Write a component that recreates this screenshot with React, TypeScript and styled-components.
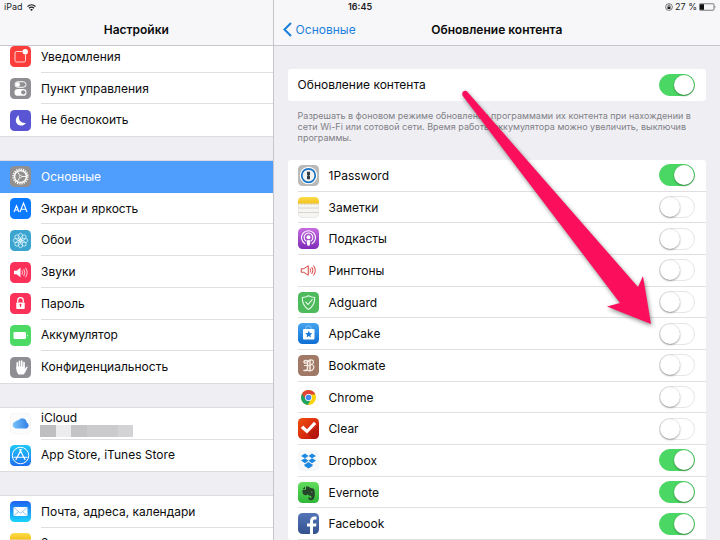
import React, { useState } from "react";
import styled, { createGlobalStyle } from "styled-components";

const Global = createGlobalStyle`
  * { box-sizing: border-box; }
  html, body { margin: 0; height: 100%; overflow: hidden; }
  body { font-family: Inter, "Liberation Sans", sans-serif; font-size: 12px; color: #0b0b0c; background: #efeef3; }
  h1, h2, p { margin: 0; }
`;

const Shell = styled.div`
  position: relative;
  display: flex;
  height: 100vh;
  overflow: hidden;
`;

const StatusBar = styled.header`
  position: absolute;
  z-index: 3;
  inset: 0 0 auto 0;
  display: grid;
  grid-template-columns: 1fr auto 1fr;
  align-items: center;
  height: 14px;
  padding: 0 4px;
  font-size: 9px;
  line-height: 14px;
  color: #1c1c1e;
`;

const StatusSide = styled.div<{ $end?: boolean }>`
  display: flex;
  align-items: center;
  justify-content: ${(p) => (p.$end ? "flex-end" : "flex-start")};
  gap: ${(p) => (p.$end ? 2 : 4)}px;
`;

const Clock = styled.time`
  font-weight: 600;
`;

const Sidebar = styled.aside`
  flex: 0 0 38%;
  display: flex;
  flex-direction: column;
  overflow: hidden;
  border-right: 1px solid #c6c6ca;
`;

const Detail = styled.main`
  position: relative;
  flex: 1;
  min-width: 0;
  overflow: hidden;
`;

const NavBar = styled.div`
  position: relative;
  z-index: 1;
  flex: none;
  display: grid;
  grid-template-columns: 1fr auto 1fr;
  align-items: center;
  height: 46px;
  padding: 14px 9px 0;
  background: #f7f7f9;
  border-bottom: 1px solid #c8c8cc;
`;

const Title = styled.h1`
  grid-column: 2;
  font-size: 12px;
  line-height: 16px;
  font-weight: 600;
  white-space: nowrap;
`;

const Back = styled.a`
  display: flex;
  align-items: center;
  gap: 4px;
  justify-self: start;
  color: #1b7fdc;
  text-decoration: none;
  line-height: 16px;
`;

const Menu = styled.nav`
  display: flex;
  flex-direction: column;
  gap: 25px;
  margin-top: -5px;
`;

/* Three rows take 95px; rows share the height of their group evenly. */
const groupHeight = (rows: number) => Math.round((rows * 95) / 3);

const Group = styled.div<{ $rows: number }>`
  display: flex;
  flex-direction: column;
  min-height: ${(p) => groupHeight(p.$rows)}px;
  background: #fff;
  box-shadow: 0 -1px #dcdbe0, 0 1px #dcdbe0;
`;

const MenuLink = styled.a<{ $active?: boolean }>`
  flex: 1;
  display: flex;
  gap: 10px;
  align-items: center;
  padding-left: 10px;
  color: ${(p) => (p.$active ? "#fff" : "inherit")};
  background: ${(p) => (p.$active ? "#4f9dfd" : "transparent")};
  text-decoration: none;
`;

const MenuText = styled.span<{ $line: boolean }>`
  flex: 1;
  align-self: stretch;
  display: flex;
  flex-direction: column;
  justify-content: center;
  line-height: 15px;
  border-bottom: 1px solid ${(p) => (p.$line ? "#dfdfe2" : "transparent")};
`;

const Redacted = styled.span`
  display: flex;
  width: 93px;
  height: 12px;
  margin-left: -1px;
`;

const Block = styled.span<{ $tone: string }>`
  flex: 1;
  background: ${(p) => p.$tone};
`;

const Content = styled.div`
  display: flex;
  flex-direction: column;
  padding: 23px 14px 0;
`;

const Card = styled.div<{ $rows: number }>`
  display: flex;
  flex-direction: column;
  min-height: ${(p) => groupHeight(p.$rows)}px;
  background: #fff;
  border-radius: 3px;
`;

const Setting = styled.label<{ $line?: boolean }>`
  flex: 1;
  display: flex;
  align-items: center;
  gap: 10px;
  margin-left: 10px;
  padding-right: 11px;
  line-height: 15px;
  border-bottom: 1px solid ${(p) => (p.$line ? "#dfdfe2" : "transparent")};
`;

const Name = styled.span`
  flex: 1;
`;

const Note = styled.p`
  padding: 9px 0 17px 10px;
  font-size: 9px;
  line-height: 11px;
  color: #818187;
`;

const Switch = styled.input`
  appearance: none;
  flex: none;
  position: relative;
  width: 36px;
  height: 22px;
  margin: 0;
  border-radius: 11px;
  border: 1px solid #e6e6e8;
  background: #fff;
  &::before {
    content: "";
    position: absolute;
    top: 0;
    left: 0;
    width: 20px;
    height: 20px;
    border-radius: 50%;
    background: #fff;
    box-shadow: 0 1px 2px rgba(0, 0, 0, 0.34), 0 0 1px rgba(0, 0, 0, 0.2);
  }
  &:checked {
    border-color: #4bd763;
    background: #4bd763;
  }
  &:checked::before {
    left: auto;
    right: 0;
  }
`;

const Pointer = styled.svg`
  position: absolute;
  z-index: 2;
  top: 84px;
  right: 62px;
  width: 200px;
  height: 248px;
  pointer-events: none;
  filter: drop-shadow(1px 2px 2px rgba(0, 0, 0, 0.45));
`;

const IconSvg = styled.svg`
  flex: none;
  width: 21px;
  height: 21px;
  display: block;
`;

const Tile = ({ fill, children }: { fill: string; children?: React.ReactNode }) => (
  <IconSvg viewBox="0 0 42 42" fill="none" aria-hidden="true">
    <defs>
      <linearGradient id="mail" x2="0" y2="1"><stop stopColor="#1d62f0" /><stop offset="1" stopColor="#1ad4fd" /></linearGradient>
      <linearGradient id="store" x2="0" y2="1"><stop stopColor="#1fc8fa" /><stop offset="1" stopColor="#1d6ff0" /></linearGradient>
      <linearGradient id="cloud" x2="1"><stop stopColor="#7cc4fa" /><stop offset="1" stopColor="#2f7fe6" /></linearGradient>
      <linearGradient id="podcast" x2="0" y2="1"><stop stopColor="#c86be0" /><stop offset="1" stopColor="#7d2bb8" /></linearGradient>
      <linearGradient id="cake" x2="0" y2="1"><stop stopColor="#45a4f0" /><stop offset="1" stopColor="#0f6fd4" /></linearGradient>
      <linearGradient id="clear" x2="1" y2="1"><stop stopColor="#f0500a" /><stop offset="1" stopColor="#c40f12" /></linearGradient>
      <linearGradient id="ever" x2="0" y2="1"><stop stopColor="#62dc5c" /><stop offset="1" stopColor="#2fb638" /></linearGradient>
      <linearGradient id="fb" x2="0" y2="1"><stop stopColor="#5475b8" /><stop offset="1" stopColor="#35528f" /></linearGradient>
      <linearGradient id="note" x2="0" y2="1"><stop stopColor="#fbdc4c" /><stop offset="1" stopColor="#f5c11a" /></linearGradient>
    </defs>
    <rect width="42" height="42" rx="9" fill={fill} />
    {children}
  </IconSvg>
);

const NotesIcon = () => (
  <Tile fill="#f6f5f2">
    <path d="M0 13V9a9 9 0 0 1 9-9h24a9 9 0 0 1 9 9v4z" fill="url(#note)" />
    <path d="M0 14h42" stroke="#b99b3c" strokeWidth="1.500" strokeDasharray="1.500 1.500" />
    <path d="M0 22h42M0 31h42" stroke="#c9c8c6" strokeWidth="1.500" />
    <path d="M.5 14v19a8.500 8.500 0 0 0 8.500 8.500h24a8.500 8.500 0 0 0 8.500-8.500V14" stroke="#dddcd9" />
  </Tile>
);

const icons: Record<string, React.ReactNode> = {
  notify: (
    <Tile fill="#fc3d39">
      <path d="M25 11H13a3 3 0 0 0-3 3v15a3 3 0 0 0 3 3h15a3 3 0 0 0 3-3V17" stroke="#fff" strokeWidth="1.600" />
      <circle cx="30.500" cy="11.500" r="5.500" fill="#fff" />
    </Tile>
  ),
  control: (
    <Tile fill="#8e8e93">
      <rect x="10" y="7.500" width="22" height="11" rx="5.500" stroke="#fff" strokeWidth="2" />
      <circle cx="15.500" cy="13" r="4.500" fill="#fff" />
      <rect x="9" y="22" width="24" height="13.500" rx="6.700" fill="#fff" />
      <circle cx="26.500" cy="28.700" r="4.300" fill="#8e8e93" />
    </Tile>
  ),
  moon: (
    <Tile fill="#5a55d3">
      <path d="M18 10.500C9.500 15 9.500 27 18.500 30.500 24 32.500 29.500 30 32 25.500 25 27.500 15.500 22 18 10.500z" fill="#fff" />
    </Tile>
  ),
  gear: (
    <Tile fill="#92908f">
      <circle cx="21" cy="21" r="14.500" stroke="#fff" strokeWidth="3.500" strokeDasharray="2.500 2.056" />
      <circle cx="21" cy="21" r="11.800" stroke="#fff" strokeWidth="2.600" />
      <circle cx="21" cy="21" r="2.400" stroke="#fff" strokeWidth="1.400" />
      <path d="M23.500 21h8.500M19.500 19l-4.500-7.500M19.500 23l-4.500 7.500" stroke="#fff" strokeWidth="1.700" />
    </Tile>
  ),
  display: (
    <Tile fill="#0b7aff">
      <path d="M8 28l5-12.500L18 28M9.500 24h7M20 28l7-18 7 18M22.500 22.500h9" stroke="#fff" strokeWidth="2.100" />
    </Tile>
  ),
  wallpaper: (
    <Tile fill="#3ba5d0">
      <g stroke="#e3f6fc" strokeWidth="1.500">
        {[0, 45, 90, 135, 180, 225, 270, 315].map((a) => (
          <ellipse key={a} cx="21" cy="13" rx="4.300" ry="6.500" transform={`rotate(${a} 21 21)`} />
        ))}
        <circle cx="21" cy="21" r="3" />
      </g>
    </Tile>
  ),
  sound: (
    <Tile fill="#fb3159">
      <path d="M8 17.500h5l8-6v19l-8-6H8z" fill="#fff" />
      <path d="M24 17q2.500 4 0 8M27.500 14q4.500 7 0 14M31 11.500q6.500 9.500 0 19" stroke="#fff" strokeWidth="1.500" />
    </Tile>
  ),
  lock: (
    <Tile fill="#fb3159">
      <rect x="12.500" y="19" width="17" height="13" rx="1.500" fill="#fff" />
      <path d="M15.500 19v-4.500a5.500 5.500 0 0 1 11 0V19" stroke="#fff" strokeWidth="2.500" />
      <path d="M21 23v5" stroke="#fb3159" strokeWidth="2.200" />
      <circle cx="21" cy="23.500" r="2" fill="#fb3159" />
    </Tile>
  ),
  battery: (
    <Tile fill="#4cd964">
      <rect x="7" y="14" width="25" height="14" rx="2.500" fill="#fff" />
      <path d="M34 18.500q3.500 2.500 0 5z" fill="#fff" />
    </Tile>
  ),
  hand: (
    <Tile fill="#8e8e93">
      <path d="M14.500 23V11.500M19 20V8.500M23.500 20V8M28 21V11" stroke="#fff" strokeWidth="3.300" strokeLinecap="round" />
      <path d="M12.800 19h16.800v5l3.500-4.500q2.500-1 2 1.500L30 31.500 27 35H17q-4.200-5-4.200-10z" fill="#fff" />
    </Tile>
  ),
  icloud: (
    <Tile fill="#fcfcfc">
      <rect x=".5" y=".5" width="41" height="41" rx="9" stroke="#eeeeef" />
      <path d="M11 31a7 7 0 0 1-1-13.500 7 7 0 0 1 7-3 9 9 0 0 1 16.500 4.500A6.500 6.500 0 0 1 33 31z" fill="url(#cloud)" />
    </Tile>
  ),
  appstore: (
    <Tile fill="url(#store)">
      <circle cx="21" cy="21" r="16.500" stroke="#fff" strokeWidth="2" />
      <path d="M22.500 9L12 29M19.500 9L30 29M8 24.500h26" stroke="#fff" strokeWidth="2.400" strokeLinecap="round" />
    </Tile>
  ),
  mail: (
    <Tile fill="url(#mail)">
      <rect x="7" y="12" width="28" height="18" rx="1.500" fill="#fff" />
      <path d="M8 13l11 10q2 1.500 4 0L34 13M8 29l9.500-8M34 29l-9.500-8" stroke="#5ba8f5" strokeWidth="1.300" />
    </Tile>
  ),
  notes: <NotesIcon />,
  password: (
    <Tile fill="#b9bab8">
      <circle cx="21" cy="21" r="17.500" fill="#fff" />
      <circle cx="21" cy="21" r="13.500" fill="#f3f3f1" stroke="#1e74c4" strokeWidth="3.500" />
      <path d="M18 13.500h6v6l-1.500 1.500 1.500 1.500v6h-6v-6l1.500-1.500L18 19.500z" fill="#333b45" />
    </Tile>
  ),
  podcasts: (
    <Tile fill="url(#podcast)">
      <path d="M14 31.500a14 14 0 1 1 14 0M15.500 25.500a8.700 8.700 0 1 1 11 0" stroke="#fff" strokeWidth="2.100" strokeLinecap="round" />
      <circle cx="21" cy="18.500" r="4" fill="#fff" />
      <path d="M17 25q4-2.500 8 0l-1.500 9.500q-2.500 2-5 0z" fill="#fff" />
    </Tile>
  ),
  ringtones: (
    <Tile fill="#fff">
      <path d="M6.500 17.500h5l9-6v19l-9-6h-5z" stroke="#d23a36" strokeWidth="1.900" />
      <path d="M24 17q2.500 4 0 8M27.500 14q4.500 7 0 14M31 11q7 10 0 20" stroke="#d8443f" strokeWidth="2" />
    </Tile>
  ),
  adguard: (
    <Tile fill="#4dba5c">
      <path d="M21 7.500q6 3.500 12.500 3.500c0 12-4 19-12.500 24-8.500-5-12.500-12-12.500-24Q15 11 21 7.500z" stroke="#e6f7e8" strokeWidth="2.200" />
      <path d="M15 19.500l5 5.500 9-10.500" stroke="#fff" strokeWidth="2.200" />
    </Tile>
  ),
  appcake: (
    <Tile fill="url(#cake)">
      <path d="M15.500 12v-1a5.500 5.500 0 0 1 11 0v1" stroke="#8cc7f6" strokeWidth="2" />
      <rect x="10" y="12" width="23" height="21" rx="2" fill="#fff" />
      <path d="M21.500 15.500l2 4.500 5 .5-3.700 3.300 1 5-4.300-2.600-4.300 2.600 1-5-3.700-3.300 5-.5z" fill="#1978d8" />
    </Tile>
  ),
  bookmate: (
    <Tile fill="#a17a67">
      <path d="M21 13q-8-4-9 .5 0 3 4 2.500M19 12v15q0 5-7 4M24 11v20" stroke="#f6ece4" strokeWidth="3" strokeLinecap="round" />
      <path d="M20 12q5-4 10-1c3 4-1 8-5 8 6 0 8 4 6 8-2 5-8 6-13 3M13 21h11" stroke="#f6ece4" strokeWidth="2.400" strokeLinecap="round" />
    </Tile>
  ),
  chrome: (
    <Tile fill="#fdfdfd">
      <rect x=".5" y=".5" width="41" height="41" rx="9" stroke="#f0f0f1" />
      <circle cx="21" cy="21" r="15" fill="#fcd20a" />
      <path d="M21 21L8 13.500a15 15 0 0 0 11.800 22.400l6.200-12z" fill="#1fa463" />
      <path d="M8 13.500A15 15 0 0 1 34.700 15H21l-6 9z" fill="#df4537" />
      <circle cx="21" cy="21" r="7" fill="#fff" />
      <circle cx="21" cy="21" r="5.600" fill="#4688f1" />
    </Tile>
  ),
  clear: (
    <Tile fill="url(#clear)">
      <path d="M19 31L42 13v20a9 9 0 0 1-9 9h-4z" fill="#9c120d" opacity=".45" />
      <path d="M5.500 20l5-5 7.500 7.500L32 7.500l4.500 4.500L18 31z" fill="#fff" />
    </Tile>
  ),
  dropbox: (
    <Tile fill="#f7f8f9">
      <path d="M14 7l7 5-7 4.500L6 12zM28 7l-7 5 7 4.500 8-4.500zM6 21l8-4.500 7 5-7 5zM36 21l-8-4.500-7 5 7 5zM13 28l1.500.5L21 24l6.500 4.500L29 28v4l-8 5-8-5z" fill="#1b87e0" />
    </Tile>
  ),
  evernote: (
    <Tile fill="url(#ever)">
      <path d="M16 9v5q0 2-2 2H9q-1 6 2 9 3 2 7 1l1-2q2 3 5 3.500c4 0 4 5 1 5-2 0-2-2-1-3-4-1-5 7 2 7 6 0 8-7 7.500-16-.5-6-1.500-8-5.500-8l-4-1q-1-2.500-6-2.500zM14 9l-5 5.500h5z" fill="#27432c" />
      <ellipse cx="27.500" cy="20" rx="1.600" ry="1.200" fill="#4bc44c" />
    </Tile>
  ),
  facebook: (
    <Tile fill="url(#fb)">
      <path d="M24 42V27h-6v-6h6v-4c0-7 3.500-10 9-10h4v6h-3.500c-3 0-3.500 1.500-3.500 4v4h7l-1 6h-6v15z" fill="#fff" />
    </Tile>
  ),
};

type MenuEntry = { icon: string; text: string; active?: boolean; account?: boolean };

const menu: MenuEntry[][] = [
  [
    { icon: "notify", text: "Уведомления" },
    { icon: "control", text: "Пункт управления" },
    { icon: "moon", text: "Не беспокоить" },
  ],
  [
    { icon: "gear", text: "Основные", active: true },
    { icon: "display", text: "Экран и яркость" },
    { icon: "wallpaper", text: "Обои" },
    { icon: "sound", text: "Звуки" },
    { icon: "lock", text: "Пароль" },
    { icon: "battery", text: "Аккумулятор" },
    { icon: "hand", text: "Конфиденциальность" },
  ],
  [
    { icon: "icloud", text: "iCloud", account: true },
    { icon: "appstore", text: "App Store, iTunes Store" },
  ],
  [
    { icon: "mail", text: "Почта, адреса, календари" },
    { icon: "notes", text: "Заметки" },
  ],
];

const tones = ["#bfbfc1", "#ececee", "#c4c4c6", "#cbcbcd", "#cbcbcd", "#d3d3d5"];

const apps = [
  { icon: "password", text: "1Password", on: true },
  { icon: "notes", text: "Заметки", on: false },
  { icon: "podcasts", text: "Подкасты", on: false },
  { icon: "ringtones", text: "Рингтоны", on: false },
  { icon: "adguard", text: "Adguard", on: false },
  { icon: "appcake", text: "AppCake", on: false },
  { icon: "bookmate", text: "Bookmate", on: false },
  { icon: "chrome", text: "Chrome", on: false },
  { icon: "clear", text: "Clear", on: false },
  { icon: "dropbox", text: "Dropbox", on: true },
  { icon: "evernote", text: "Evernote", on: true },
  { icon: "facebook", text: "Facebook", on: true },
];

export default function App() {
  const [enabled, setEnabled] = useState(() => apps.map((a) => a.on));
  const [all, setAll] = useState(true);

  return (
    <>
      <Global />
      <Shell>
        <StatusBar>
          <StatusSide>
            <span>iPad</span>
            <svg width="9" height="7" viewBox="0 0 18 14" fill="none" aria-hidden="true">
              <path d="M1 5q8-7 16 0M4 8.500q5-4.500 10 0" stroke="#1c1c1e" strokeWidth="2.400" />
              <path d="M6 11q3-2.500 6 0l-3 3z" fill="#1c1c1e" />
            </svg>
          </StatusSide>
          <Clock>16:45</Clock>
          <StatusSide $end>
            <svg width="8" height="8" viewBox="0 0 16 16" fill="none" aria-hidden="true">
              <circle cx="8" cy="8" r="6.800" stroke="#3a3a3c" strokeWidth="1.300" />
              <rect x="5" y="7.500" width="6" height="4.500" fill="#1c1c1e" />
              <path d="M6 8V6a2 2 0 0 1 4 0v2" stroke="#1c1c1e" strokeWidth="1.300" />
            </svg>
            <span>27 %</span>
            <svg width="17" height="8" viewBox="0 0 34 16" fill="none" aria-hidden="true">
              <rect x="1" y="1.500" width="29" height="13" rx="1.500" stroke="#3a3a3c" strokeWidth="1.300" />
              <rect x="2" y="2.500" width="8" height="11" fill="#111" />
              <path d="M31.500 5.500q2.500 2.500 0 5z" fill="#3a3a3c" />
            </svg>
          </StatusSide>
        </StatusBar>

        <Sidebar>
          <NavBar>
            <Title>Настройки</Title>
          </NavBar>
          <Menu>
            {menu.map((group, g) => (
              <Group key={g} $rows={group.length}>
                {group.map((m, i) => (
                  <MenuLink key={m.text} href="#" $active={m.active} aria-current={m.active ? "page" : undefined}>
                    {icons[m.icon]}
                    <MenuText $line={!m.active && i < group.length - 1}>
                      {m.text}
                      {m.account && (
                        <Redacted aria-hidden="true">
                          {tones.map((t, k) => (
                            <Block key={k} $tone={t} />
                          ))}
                        </Redacted>
                      )}
                    </MenuText>
                  </MenuLink>
                ))}
              </Group>
            ))}
          </Menu>
        </Sidebar>

        <Detail>
          <NavBar>
            <Back href="#">
              <svg width="9" height="15" viewBox="0 0 9 15" fill="none" aria-hidden="true">
                <path d="M8 1L1.500 7.500 8 14" stroke="#1b7fdc" strokeWidth="2" />
              </svg>
              Основные
            </Back>
            <Title as="h2">Обновление контента</Title>
          </NavBar>
          <Content>
            <Card $rows={1}>
              <Setting>
                <Name>Обновление контента</Name>
                <Switch type="checkbox" role="switch" checked={all} onChange={() => setAll(!all)} />
              </Setting>
            </Card>
            <Note>
              Разрешать в фоновом режиме обновление программами их контента при нахождении в сети Wi-Fi или сотовой
              сети. Время работы аккумулятора можно увеличить, выключив программы.
            </Note>
            <Card $rows={apps.length}>
              {apps.map((a, i) => (
                <Setting key={a.text} $line>
                  {icons[a.icon]}
                  <Name>{a.text}</Name>
                  <Switch
                    type="checkbox"
                    role="switch"
                    checked={enabled[i]}
                    onChange={() => setEnabled(enabled.map((v, k) => (k === i ? !v : v)))}
                  />
                </Setting>
              ))}
            </Card>
          </Content>
          <Pointer viewBox="458 84 200 248" aria-hidden="true">
            <path d="M467.500 92L638 287l5-11 8 48-44-17.500 13-3.500L462.500 95.500Q461.500 92 464 91t3.500 1z" fill="#fb0f5c" />
          </Pointer>
        </Detail>
      </Shell>
    </>
  );
}
